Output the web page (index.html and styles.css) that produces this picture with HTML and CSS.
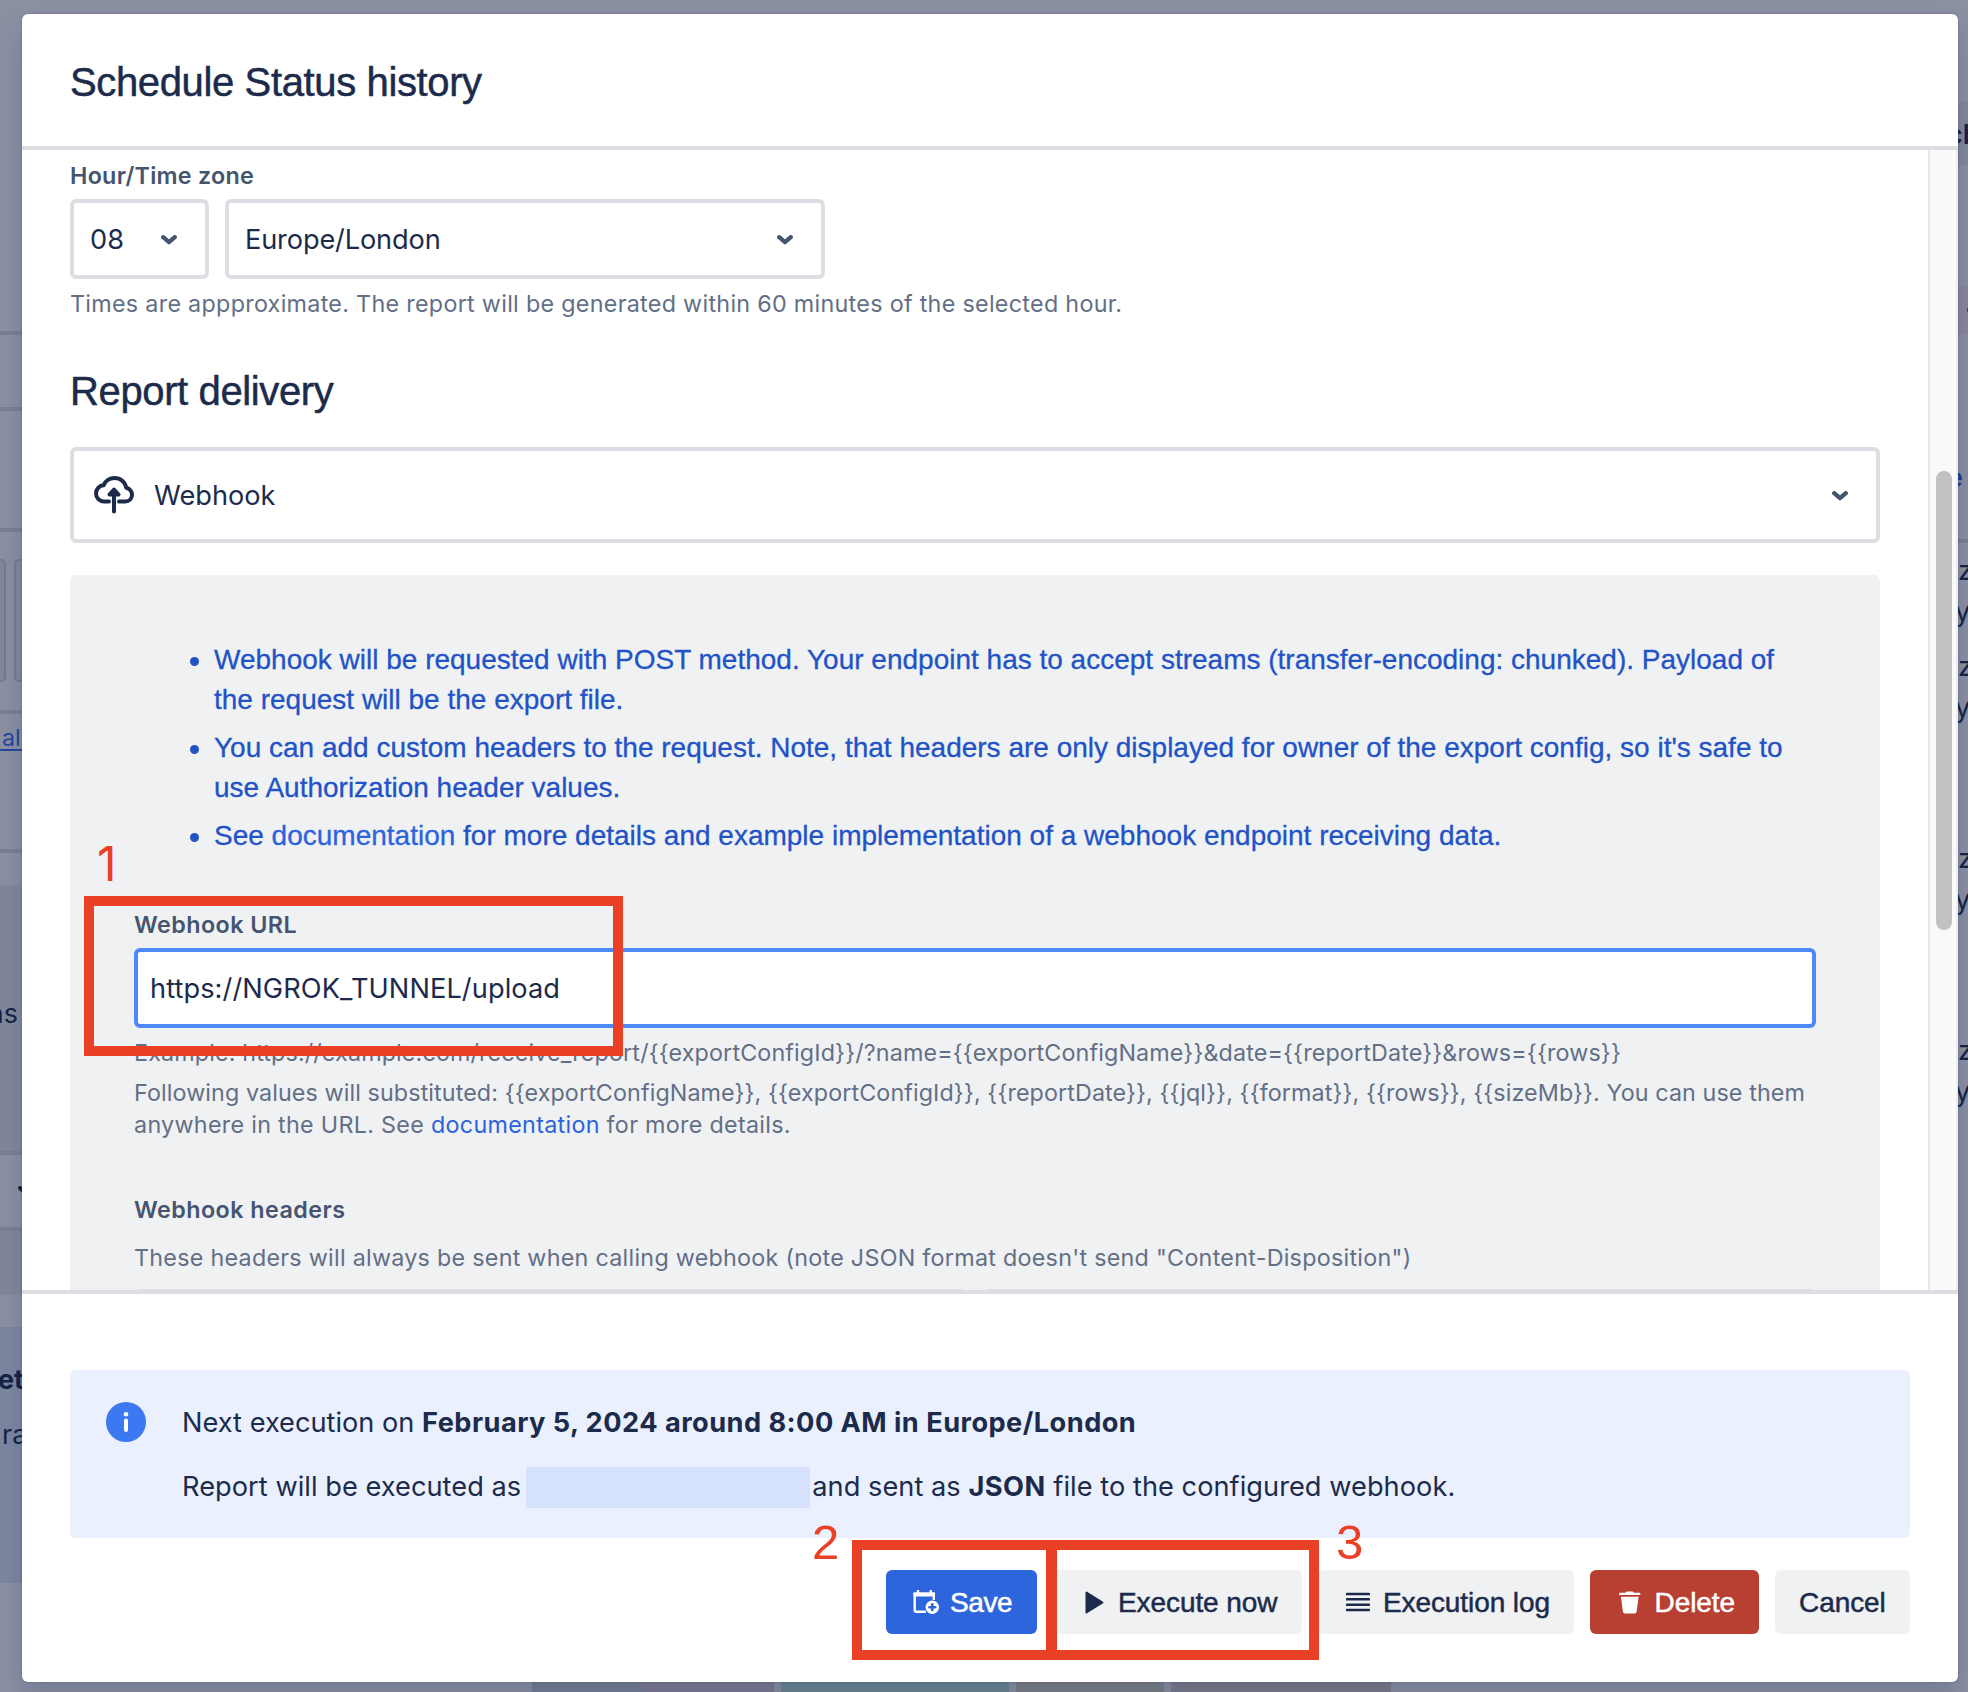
FILE: index.html
```html
<!DOCTYPE html>
<html lang="en">
<head>
<meta charset="utf-8">
<title>Schedule Status history</title>
<link rel="stylesheet" href="styles.css">
</head>
<body>
<div class="stage">
  <div class="page">
    <div class="rail rail-left">
      <div class="h331"></div><div class="rule"></div>
      <div class="h72"></div><div class="rule"></div>
      <div class="h117"></div><div class="rule"></div>
      <div class="cells"><span class="cell cell-a"></span><span class="cell cell-b"></span></div><div class="rule"></div>
      <div class="link-cell"><span class="back-link">al</span></div><div class="rule"></div>
      <div class="h32"></div>
      <div class="shade ns-cell">ns</div><div class="rule"></div>
      <div class="chev-cell"><svg class="back-chev" viewBox="0 0 16 10"><path d="M2 2l6 6 6-6"/></svg></div><div class="rule"></div>
      <div class="shade h64"></div>
      <div class="h32"></div>
      <div class="blue-cell"><b>et</b><span>ra</span></div>
    </div>
    <div class="rail rail-right">
      <div class="h102"></div>
      <div class="shade ch-cell">ch</div>
      <div class="h120"></div>
      <div class="pink-cell"><span class="dot"></span></div>
      <div class="e-cell">e</div><div class="rule"></div>
      <div class="zy"><span>z</span><span>y</span></div>
      <div class="zy zy-tall"><span>z</span><span>y</span></div>
      <div class="zy zy-tall"><span>z</span><span>y</span></div>
      <div class="zy"><span>z</span><span>y</span></div>
    </div>
    <div class="strip">
      <i class="s1"></i><i class="s2"></i><i class="s3"></i><i class="s4"></i><i class="s5"></i>
    </div>
  </div>

  <section class="modal">
    <header class="modal-head"><h1>Schedule Status history</h1></header>
    <div class="modal-body">
      <div class="content">
        <div class="label hour-label">Hour/Time zone</div>
        <div class="row">
          <div class="select hour"><span>08</span><svg class="chev" viewBox="0 0 16 10"><path d="M2.200 2.200L8 7.200l5.800-5"/></svg></div>
          <div class="select zone"><span>Europe/London</span><svg class="chev" viewBox="0 0 16 10"><path d="M2.200 2.200L8 7.200l5.800-5"/></svg></div>
        </div>
        <p class="hint hint-wide">Times are appproximate. The report will be generated within 60 minutes of the selected hour.</p>
        <h2>Report delivery</h2>
        <div class="select big">
          <svg class="cloud" viewBox="0 0 40 38"><path d="M15 25.500H10C5.500 25.500 2 22 2 17.500 2 13 5.300 9.500 9.600 9.300 11.300 4.800 15.800 2 20.500 2c6 0 10.800 4.200 11.700 9.800 3.400.7 5.800 3.500 5.800 7 0 3.900-3 6.700-6.700 6.700H25M20 35.500V15.500M15.500 18.500L20 13.500l4.500 5z"/></svg>
          <span>Webhook</span>
          <svg class="chev" viewBox="0 0 16 10"><path d="M2.200 2.200L8 7.200l5.800-5"/></svg>
        </div>
        <div class="panel">
          <ul class="notes">
            <li>Webhook will be requested with POST method. Your endpoint has to accept streams (transfer-encoding: chunked). Payload of the request will be the export file.</li>
            <li>You can add custom headers to the request. Note, that headers are only displayed for owner of the export config, so it's safe to use Authorization header values.</li>
            <li>See <a>documentation</a> for more details and example implementation of a webhook endpoint receiving data.</li>
          </ul>
          <div class="label url-label">Webhook URL</div>
          <div class="input">https://NGROK_TUNNEL/upload</div>
          <p class="hint hint-example">Example: https://example.com/receive_report/{{exportConfigId}}/?name={{exportConfigName}}&amp;date={{reportDate}}&amp;rows={{rows}}</p>
          <p class="hint hint-values">Following values will substituted: {{exportConfigName}}, {{exportConfigId}}, {{reportDate}}, {{jql}}, {{format}}, {{rows}}, {{sizeMb}}. You can use them <span class="hint-wide">anywhere in the URL. See <a>documentation</a> for more details.</span></p>
          <div class="label headers-label">Webhook headers</div>
          <p class="hint headers-hint">These headers will always be sent when calling webhook (note JSON format doesn't send "Content-Disposition")</p>
          <div class="fields"><i></i><i></i></div>
        </div>
      </div>
      <div class="scrollbar"><div class="thumb"></div></div>
    </div>
    <footer class="modal-foot">
      <div class="info">
        <svg class="info-icon" viewBox="0 0 40 40"><circle cx="20" cy="20" r="20"/><circle class="w" cx="20" cy="12.200" r="2.300"/><rect class="w" x="18" y="16.500" width="4" height="13.500" rx="2"/></svg>
        <div class="info-text">
          <p>Next execution on <b>February 5, 2024 around 8:00 AM in Europe/London</b></p>
          <p class="exec"><span>Report will be executed as</span><i class="redact"></i><span>and sent as <b>JSON</b> file to the configured webhook.</span></p>
        </div>
      </div>
      <div class="actions">
        <button class="btn save"><svg class="ic-cal" viewBox="0 0 27 25"><path d="M1.700 3v17q0 1.700 1.700 1.700h9.500M20.800 4v6M5 0v4M17.800 0v4" class="ln"/><path d="M.5 2.300h21.500V6.500H.5z" class="f"/><circle cx="19.300" cy="17.200" r="6.700" class="f"/><path d="M19.300 14.300v5.800M16.400 17.200h5.800" class="plus"/></svg><span>Save</span></button>
        <button class="btn run"><svg class="ic-play" viewBox="0 0 19 23"><path d="M1.500 1.500v20l16-10z"/></svg><span>Execute now</span></button>
        <button class="btn log"><svg class="ic-lines" viewBox="0 0 24 20"><path d="M1 2h22M1 7.300h22M1 12.700h22M1 18h22"/></svg><span>Execution log</span></button>
        <button class="btn del"><svg class="ic-trash" viewBox="0 0 22 23"><path d="M1 1.500h5.500L8 .3h6l1.500 1.200H21q.8 0 .8 1v1.300H.2V2.500q0-1 .8-1zM2 5.500h18l-2 15.500q-.3 1.700-2 1.700H6q-1.700 0-2-1.700z"/></svg><span>Delete</span></button>
        <button class="btn cancel"><span>Cancel</span></button>
      </div>
    </footer>
  </section>

  <div class="mark box-1"></div><div class="mark box-2"></div><div class="mark box-3"></div>
  <span class="num num-1">1</span><span class="num num-2">2</span><span class="num num-3">3</span>
</div>
</body>
</html>
```
FILE: styles.css
```css
* { box-sizing: border-box; }
body, h1, h2, p, ul { margin: 0; padding: 0; }
body { background: #8a8fa2; font-family: Inter, "Noto Sans", sans-serif; color: #1c2b4b; }
.stage { position: relative; width: 1968px; height: 1692px; overflow: hidden; }

/* dimmed page behind the dialog */
.page { display: grid; grid-template-columns: 22px 1fr 10px; grid-template-rows: 1682px 10px; height: 1692px; }
.rail { overflow: hidden; color: #152348; font-size: 27px; white-space: nowrap; }
.rail-right { grid-column: 3; }
.rule { height: 4px; background: #787f94; }
.shade { background: #81879a; }
.h331 { height: 331px; } .h72 { height: 72px; } .h117 { height: 117px; }
.h32 { height: 32px; } .h64 { height: 64px; } .h102 { height: 102px; } .h120 { height: 120px; }
.cells { height: 178px; padding-top: 27px; display: flex; gap: 8px; }
.cell { height: 123px; background: #82889b; border: 2px solid #747b90; }
.cell-a { width: 6px; border-left: 0; border-radius: 0 5px 5px 0; }
.cell-b { width: 8px; border-right: 0; border-radius: 5px 0 0 5px; }
.link-cell { height: 135px; font-size: 23.3px; color: #25479c; }
.back-link { display: block; height: 37px; padding: 9px 0 0 2px; line-height: 30px; border-bottom: 2px solid #25479c; }
.ns-cell { height: 266px; padding: 109px 4px 0 0; display: flex; justify-content: flex-end; line-height: 40px; }
.chev-cell { height: 72px; padding: 31px 0 0 18px; }
.back-chev { display: block; width: 16px; height: 10px; fill: none; stroke: #152348; stroke-width: 4; stroke-linecap: round; }
.blue-cell { height: 256px; background: #7b869f; padding-top: 33px; display: grid; align-content: start; row-gap: 15px; line-height: 40px; }
.blue-cell b { margin-left: -2px; }
.blue-cell span { margin-left: 2px; }
.ch-cell { height: 64px; line-height: 65px; text-indent: -11px; font-weight: 600; }
.pink-cell { height: 48px; background: #8a8499; padding: 21px 0 0 9px; }
.dot { display: block; width: 6px; height: 6px; border-radius: 3px; background: #55304e; }
.e-cell { height: 205px; padding-top: 124px; line-height: 40px; text-indent: -11px; font-weight: 600; color: #1f3f93; }
.zy { display: grid; height: 96px; padding-top: 9px; row-gap: 3px; line-height: 38px; align-content: start; }
.zy-tall { height: 192px; }
.zy span:nth-child(2) { text-indent: -3px; }
.strip { grid-column: 1 / 4; display: grid; grid-template-columns: 105px 130px 228px 148px 220px; column-gap: 7px; padding-left: 532px; }
.s1 { background: #757e92; margin-right: -7px; } .s2 { background: #7d7a91; } .s3 { background: #6c8591; } .s4 { background: #7b7f84; } .s5 { background: #7b7b8b; }

/* dialog */
.modal { position: absolute; left: 22px; top: 14px; width: 1936px; height: 1668px; background: #fff; border-radius: 6px; overflow: hidden; display: flex; flex-direction: column; }
.stage::before { content: ""; position: absolute; left: 22px; top: 14px; width: 1936px; height: 1668px; border-radius: 6px; box-shadow: 0 0 2px rgba(9,30,66,.31), 0 16px 24px rgba(9,30,66,.15); }
.modal-head { height: 136px; padding: 44px 48px 0; border-bottom: 4px solid #dddee4; }
h1, h2 { font: 400 40px/48px "Liberation Sans", Arial, sans-serif; letter-spacing: -.37px; -webkit-text-stroke: .5px; }
.modal-body { height: 1140px; display: flex; overflow: hidden; }
.content { width: 1906px; padding: 10px 48px 0; }
.scrollbar { width: 30px; background: #fafafa; border-left: 2px solid #e8e8e8; border-right: 2px solid #ededed; padding: 321px 4px 0 6px; }
.thumb { height: 459px; border-radius: 8px; background: #c1c1c1; }
.label { font-size: 23.3px; line-height: 32px; font-weight: 600; color: #46556f; margin-bottom: 7px; letter-spacing: .45px; }
.hour-label { letter-spacing: .27px; }
.row { display: flex; gap: 16px; }
.select { display: flex; align-items: center; justify-content: space-between; height: 80px; border: 4px solid #dddee4; border-radius: 6px; background: #fff; font-size: 27.2px; padding: 0 28px 0 16px; }
.hour { width: 139px; }
.zone { width: 600px; padding-right: 28px; letter-spacing: -.15px; }
.chev { width: 16px; height: 10px; margin-top: 2px; fill: none; stroke: #44546f; stroke-width: 4.200; stroke-linecap: round; stroke-linejoin: round; }
.hint { margin-top: 9px; font-size: 23.3px; line-height: 32px; color: #626f86; }
.hint-wide { letter-spacing: .3px; }
.hint-example { letter-spacing: .14px; }
.hint-values { margin-top: 8px; letter-spacing: .1px; }
h2 { margin: 47px 0 32px; }
.big { height: 96px; padding: 0 28px 0 20px; }
.big span { flex: 1; margin-left: 20px; }
.cloud { width: 40px; height: 38px; fill: none; stroke: #1c2b4b; stroke-width: 4; stroke-linecap: round; stroke-linejoin: round; }
.panel { margin-top: 32px; padding: 65px 64px 0; height: 720px; background: #f0f1f3; border-radius: 6px; }
.notes { display: grid; gap: 8px; padding-left: 80px; list-style: none; font: 400 28px/40px "Liberation Sans", Arial, sans-serif; color: #1f53c6; -webkit-text-stroke: .3px; }
.notes li { position: relative; }
.notes li::before { content: ""; position: absolute; left: -24px; top: 17px; width: 9px; height: 9px; border-radius: 50%; background: #1f53c6; }
a { color: #2b63dd; }
.url-label { margin-top: 53px; }
.input { height: 80px; border: 4px solid #4f89f8; border-radius: 6px; background: #fff; font-size: 27.2px; line-height: 74px; padding-left: 12px; letter-spacing: .08px; }
.headers-label { margin-top: 53px; }
.headers-hint { margin-top: 16px; letter-spacing: .27px; }
.fields { display: grid; grid-template-columns: 1fr 1fr; gap: 16px; margin-top: 15px; }
.fields i { height: 80px; border: 4px solid #dddee4; border-radius: 6px; }
.modal-foot { border-top: 4px solid #dddee4; padding: 76px 48px 0; flex: 1; }
.info { height: 168px; padding: 32px 36px; display: flex; gap: 36px; background: #eaf0fd; border-radius: 6px; }
.info-icon { width: 40px; height: 40px; fill: #3b78f2; }
.info-icon .w { fill: #fff; }
.info-text { display: grid; gap: 24px; align-content: start; padding-top: 1px; font-size: 27.2px; line-height: 40px; white-space: nowrap; }
.exec { display: flex; letter-spacing: .04px; }
.redact { width: 284px; height: 41px; margin: 0 2px 0 5px; background: #d6e1fb; }
b { font-weight: 700; }
.info-text b { letter-spacing: .46px; }
.actions { display: flex; justify-content: flex-end; gap: 16px; margin-top: 32px; }
.btn { display: flex; align-items: center; height: 64px; padding: 0 24px; border: 0; border-radius: 6px; background: #f0f1f3; color: #1c2b4b; font: 400 28px/40px "Liberation Sans", Arial, sans-serif; letter-spacing: -.08px; -webkit-text-stroke: .5px; white-space: nowrap; }
.btn span { padding-top: 2px; }
.save { width: 151px; padding-left: 27px; background: #2c65dc; color: #fff; }
.save span { letter-spacing: -.4px; }
.run { width: 249px; padding-left: 32px; }
.log { width: 256px; padding-left: 28px; }
.del { width: 169px; padding-left: 29px; background: #b74033; color: #fff; }
.cancel { width: 135px; }
.ic-cal { width: 27px; height: 25px; margin-right: 10px; }
.ic-cal .ln { fill: none; stroke: #fff; stroke-width: 2.400; }
.ic-cal .f { fill: #fff; }
.ic-cal .plus { stroke: #2c65dc; stroke-width: 2.600; stroke-linecap: round; }
.ic-play { width: 19px; height: 23px; margin-right: 14px; fill: #1c2b4b; stroke: #1c2b4b; stroke-width: 2; stroke-linejoin: round; }
.ic-lines { width: 24px; height: 20px; margin-right: 13px; stroke: #1c2b4b; stroke-width: 2.600; stroke-linecap: round; }
.ic-trash { width: 22px; height: 23px; margin-right: 14px; fill: #fff; }

/* callouts */
.mark { position: absolute; border: 10px solid #ea4025; }
.box-1 { left: 84px; top: 896px; width: 539px; height: 160px; }
.box-2 { left: 852px; top: 1540px; width: 205px; height: 120px; }
.box-3 { left: 1046px; top: 1540px; width: 273px; height: 120px; }
.num { position: absolute; color: #ea4025; font: 400 49px/56px "Liberation Sans", Arial, sans-serif; }
.num-1 { left: 97px; top: 836px; font-family: Inter, sans-serif; font-size: 48px; }
.num-2 { left: 812px; top: 1514px; }
.num-3 { left: 1336px; top: 1514px; }
```
